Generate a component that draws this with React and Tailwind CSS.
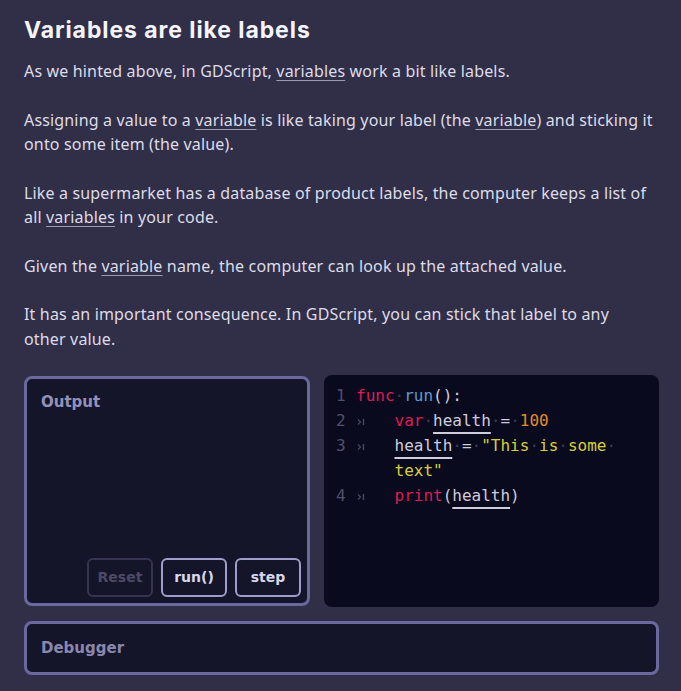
import React from "react";

const body = { fontFamily: '"Noto Sans", "Open Sans", sans-serif' };
const head = { fontFamily: 'Inter, "Noto Sans", sans-serif' };
const label = { fontFamily: '"DejaVu Sans", Inter, sans-serif' };
const mono = { fontFamily: '"DejaVu Sans Mono", "Liberation Mono", monospace' };

function V({ children }) {
  return (
    <span className="underline decoration-[#9d9bb4] decoration-1 underline-offset-[3px]">
      {children}
    </span>
  );
}

function Dot() {
  return <span className="text-[#3d3b55]">·</span>;
}

function Tab() {
  return (
    <span className="inline-flex w-[38.5px] items-center">
      <svg width="9" height="8" viewBox="0 0 9 8" className="ml-[1px]">
        <path d="M1 1.5 L3.5 4 L1 6.5" fill="none" stroke="#4a4862" strokeWidth="1.2" />
        <path d="M6.5 1 V7" stroke="#4a4862" strokeWidth="1.4" />
      </svg>
    </span>
  );
}

function H() {
  return (
    <span className="text-[#cfcddd] underline decoration-[#cfcddd] decoration-2 underline-offset-[6px]">
      health
    </span>
  );
}

function Line({ n, children }) {
  return (
    <div className="flex h-[25px] items-center whitespace-pre">
      <span className="w-[20px] text-[#52506a]">{n}</span>
      <span>{children}</span>
    </div>
  );
}

function Btn({ children, disabled }) {
  return (
    <button
      style={label}
      className={
        "h-[39px] w-[66px] rounded-md border-2 text-[14px] font-bold " +
        (disabled
          ? "border-[#363450] text-[#4c4a64]"
          : "border-[#a09dcc] text-[#d9d7ee]")
      }
    >
      {children}
    </button>
  );
}

export default function App() {
  return (
    <div className="min-h-[691px] bg-[#312f48] pl-6 pr-[22px] pt-4 pb-4" style={body}>
      <h1 style={head} className="text-[23px] leading-[28px] font-bold tracking-[0.04em] text-[#f5f4fa] mb-[15px]">
        Variables are like labels
      </h1>
      <div className="pr-[5px] text-[16px] leading-[24.5px] tracking-[0.01em] text-[#dddce8]">
        <p className="mb-6">
          As we hinted above, in GDScript, <V>variables</V> work a bit like labels.
        </p>
        <p className="mb-6">
          Assigning a value to a <V>variable</V> is like taking your label (the <V>variable</V>) and sticking it onto some item (the value).
        </p>
        <p className="mb-6">
          Like a supermarket has a database of product labels, the computer keeps a list of all <V>variables</V> in your code.
        </p>
        <p className="mb-6">
          Given the <V>variable</V> name, the computer can look up the attached value.
        </p>
        <p className="mb-6">
          It has an important consequence. In GDScript, you can stick that label to any other value.
        </p>
      </div>

      <div className="flex gap-[14px] h-[232px]">
        <div className="w-[286px] my-[1px] rounded-lg border-[3px] border-[#6b679f] bg-[#15152a] flex flex-col justify-between px-[14px] pt-[12px] pb-[6px]">
          <div style={label} className="text-[15px] font-bold text-[#9491b9]">
            Output
          </div>
          <div className="flex justify-end gap-2 -mr-[8px]">
            <Btn disabled>Reset</Btn>
            <Btn>run()</Btn>
            <Btn>step</Btn>
          </div>
        </div>
        <div
          className="flex-1 rounded-lg bg-[#0a0a1e] pl-3 pt-2 text-[16px] text-[#cfcddd]"
          style={mono}
        >
          <Line n="1">
            <span className="text-[#dc1d58]">func</span>
            <Dot />
            <span className="text-[#5f9ad2]">run</span>
            ():
          </Line>
          <Line n="2">
            <Tab />
            <span className="text-[#dc1d58]">var</span>
            <Dot />
            <H />
            <Dot />=<Dot />
            <span className="text-[#e38b2b]">100</span>
          </Line>
          <Line n="3">
            <Tab />
            <H />
            <Dot />=<Dot />
            <span className="text-[#d7ce3b]">
              "This<Dot />is<Dot />some<Dot />
            </span>
          </Line>
          <Line n="">
            <span className="inline-block w-[38.5px]" />
            <span className="text-[#d7ce3b]">text"</span>
          </Line>
          <Line n="4">
            <Tab />
            <span className="text-[#dc1d58]">print</span>(
            <H />)
          </Line>
        </div>
      </div>

      <div className="mt-[14px] h-[54px] rounded-lg border-[3px] border-[#6b679f] bg-[#15152a] flex items-center px-[14px]">
        <div style={label} className="text-[15px] font-bold text-[#8a87ae]">
          Debugger
        </div>
      </div>
    </div>
  );
}
